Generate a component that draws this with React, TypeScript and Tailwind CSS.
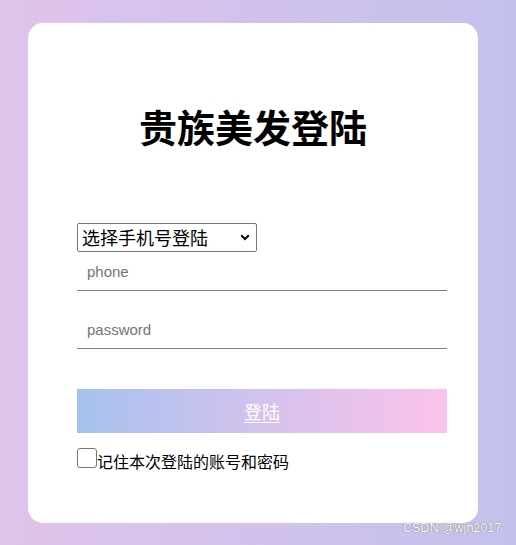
import React from "react";

export default function App() {
  const cjk = { fontFamily: '"Microsoft YaHei", "Noto Sans CJK SC", "Liberation Sans", sans-serif' };
  return (
    <div
      className="relative w-[516px] h-[545px] overflow-hidden bg-gradient-to-r from-[#dfc3ea] to-[#c3c1ec]"
      style={cjk}
    >
      <div className="pt-[23px] pl-[28px]">
        <div className="w-[450px] h-[500px] bg-white rounded-[15px] flex flex-col">
          <h1 className="mt-[77px] text-center text-[38px] leading-[52px] font-bold text-black">
            贵族美发登陆
          </h1>
          <div className="ml-[49px] mt-[71px] flex flex-col">
            <div className="relative w-[180px] h-[29px]">
              <select className="appearance-none w-full h-full border border-[#767676] rounded-[2px] bg-white pl-[4px] text-[18px] leading-[27px] text-black outline-none">
                <option>选择手机号登陆</option>
                <option>选择账号登陆</option>
              </select>
              <svg
                className="absolute right-[7px] top-[11px] pointer-events-none"
                width="10"
                height="7"
                viewBox="0 0 10 7"
              >
                <path d="M1.2 1.2 L5 5 L8.8 1.2" stroke="#000" strokeWidth="2" fill="none" />
              </svg>
            </div>
            <input
              placeholder="phone"
              className="w-[370px] h-[39px] border-b border-[#808080] pl-[10px] text-[15px] outline-none placeholder:text-[#757575]"
              style={{ fontFamily: '"Liberation Sans", Arial, sans-serif' }}
            />
            <input
              placeholder="password"
              type="password"
              className="mt-[20px] w-[370px] h-[38px] border-b border-[#808080] pl-[10px] text-[15px] outline-none placeholder:text-[#757575]"
              style={{ fontFamily: '"Liberation Sans", Arial, sans-serif' }}
            />
            <button className="mt-[40px] w-[370px] h-[44px] bg-gradient-to-r from-[#a6c1ee] to-[#fbc2eb] text-white text-[18px] underline underline-offset-[3px]">
              登陆
            </button>
            <label className="mt-[15px] flex items-end text-[16px] leading-[20px] text-black">
              <input
                type="checkbox"
                className="appearance-none w-[20px] h-[20px] border border-[#767676] rounded-[3px] bg-white mb-[1px]"
              />
              <span className="-mb-[2px]">记住本次登陆的账号和密码</span>
            </label>
          </div>
        </div>
      </div>
      <div
        className="absolute left-[403px] top-[519px] text-[12.5px] text-white"
        style={{
          fontFamily: '"Liberation Sans", Arial, sans-serif',
          textShadow: "0 0 1px #777, 0 0 1px #777",
        }}
      >
        CSDN @wjh2017
      </div>
    </div>
  );
}
